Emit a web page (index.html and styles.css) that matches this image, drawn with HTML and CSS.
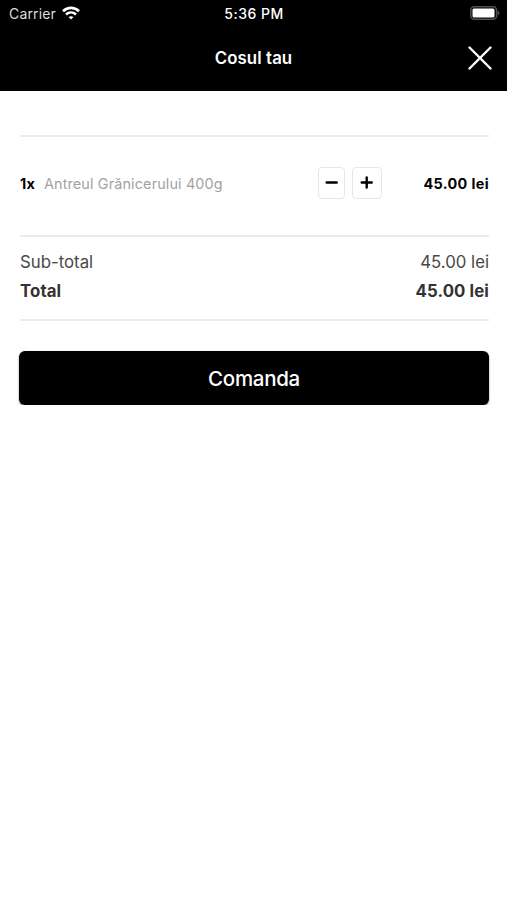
FILE: index.html
```html
<!DOCTYPE html>
<html lang="ro">
<head>
  <meta charset="UTF-8">
  <meta name="viewport" content="width=device-width, initial-scale=1.0">
  <title>Cosul tau</title>
  <link rel="stylesheet" href="styles.css">
</head>
<body>
  <header class="header">
    <div class="status-bar">
      <div class="carrier">
        <span>Carrier</span>
        <svg class="wifi-icon" viewBox="0 0 18 14" fill="none" stroke="#fff" stroke-width="2.6">
          <path d="M1 5.2C5.6.8 12.4.8 17 5.2"/>
          <path d="M4 8.5c2.9-2.7 7.1-2.7 10 0"/>
          <path d="M9 13.6l-2.5-2.5c1.4-1.3 3.6-1.3 5 0z" fill="#fff" stroke="none"/>
        </svg>
      </div>
      <span class="time">5:36 PM</span>
      <svg class="battery-icon" viewBox="0 0 30 14">
        <rect x=".8" y=".8" width="25.8" height="12.4" rx="3.4" fill="none" stroke="#505050" stroke-width="1.5"/>
        <rect x="2.5" y="2.5" width="22" height="9" rx="1.6" fill="#fff"/>
        <path d="M27.8 4.8c2 .8 2 3.6 0 4.4z" fill="#606060"/>
      </svg>
    </div>
    <div class="title-bar">
      <h1>Cosul tau</h1>
      <button class="close-btn" aria-label="Inchide">
        <svg viewBox="0 0 24 24" fill="none" stroke="#fff" stroke-width="2.4" stroke-linecap="round">
          <path d="M1.5 1.5l21 21M22.5 1.5l-21 21"/>
        </svg>
      </button>
    </div>
  </header>

  <main class="cart">
    <div class="cart-item">
      <span class="quantity">1x</span>
      <span class="name">Antreul Grănicerului 400g</span>
      <button class="qty-btn minus" aria-label="Scade">
        <svg viewBox="0 0 14 14" stroke="#000" stroke-width="2.4" stroke-linecap="round"><path d="M1.7 6.5h10"/></svg>
      </button>
      <button class="qty-btn plus" aria-label="Adauga">
        <svg viewBox="0 0 14 14" stroke="#000" stroke-width="2.4" stroke-linecap="round"><path d="M1.7 6.5h10M6.7 1.5v10"/></svg>
      </button>
      <span class="price">45.00 lei</span>
    </div>

    <div class="summary">
      <div class="summary-row subtotal">
        <span>Sub-total</span>
        <span>45.00 lei</span>
      </div>
      <div class="summary-row total">
        <span>Total</span>
        <span>45.00 lei</span>
      </div>
    </div>

    <button class="order-btn">Comanda</button>
  </main>
</body>
</html>
```

FILE: styles.css
```css
* {
  margin: 0;
  padding: 0;
  box-sizing: border-box;
  font-family: Inter, sans-serif;
}

body {
  background-color: #fff;
  color: #000;
}

button {
  border: none;
  background: none;
  cursor: pointer;
}

svg {
  display: block;
}

.header {
  height: 91px;
  background-color: #000;
  color: #fff;
}

.status-bar {
  display: grid;
  grid-template-columns: 1fr auto 1fr;
  align-items: center;
  height: 27px;
  padding: 0 8px 0 9px;
}

.carrier {
  display: flex;
  align-items: center;
  gap: 6px;
  font-size: 14px;
  letter-spacing: 0.15px;
  color: #ddd;
}

.wifi-icon {
  width: 18px;
  height: 14px;
  margin-top: -2px;
}

.time {
  font-size: 14px;
  font-weight: 500;
  letter-spacing: 0.5px;
}

.battery-icon {
  width: 30px;
  height: 14px;
  margin-top: -1px;
  margin-right: -1px;
  justify-self: end;
}

.title-bar {
  display: grid;
  grid-template-columns: 1fr auto 1fr;
  align-items: center;
  height: 62px;
  padding: 0 15px;
}

h1 {
  grid-column: 2;
  font-size: 16.8px;
  font-weight: 600;
  letter-spacing: 0.1px;
}

.close-btn {
  justify-self: end;
}

.close-btn svg {
  width: 24px;
  height: 24px;
}

.cart {
  padding: 44px 18px 0 19px;
}

.cart-item {
  display: flex;
  align-items: center;
  height: 100px;
  margin-left: 1px;
  padding-bottom: 6px;
  border-top: 2px solid #eaeaea;
  font-size: 14.4px;
}

.quantity {
  font-weight: 700;
  letter-spacing: 0.2px;
}

.name {
  flex: 1;
  margin-left: 9px;
  letter-spacing: 0.14px;
  color: #a3a3a3;
}

.qty-btn {
  display: flex;
  align-items: center;
  justify-content: center;
  width: 27px;
  height: 32px;
  border: 1.5px solid #e6e6e6;
  border-radius: 4px;
}

.qty-btn svg {
  width: 14px;
  height: 14px;
}

.plus {
  width: 30px;
  margin-left: 7px;
}

.price {
  width: 107px;
  font-weight: 700;
  letter-spacing: 0.38px;
  text-align: right;
}

.summary {
  height: 86px;
  margin-left: 1px;
  padding-top: 10px;
  border-top: 2px solid #eaeaea;
  border-bottom: 2px solid #eaeaea;
  color: #333;
}

.summary-row {
  display: flex;
  justify-content: space-between;
  font-size: 16.8px;
  line-height: 30px;
}

.subtotal {
  color: #484848;
}

.total {
  font-weight: 700;
  letter-spacing: 0.1px;
  line-height: 28px;
}

.order-btn {
  width: 100%;
  height: 54px;
  margin-top: 30px;
  border-radius: 6px;
  background-color: #000;
  box-shadow: 0 1px 2px rgba(0, 0, 0, 0.5);
  color: #fff;
  font-size: 20.5px;
  font-weight: 450;
  letter-spacing: -0.3px;
}
```
